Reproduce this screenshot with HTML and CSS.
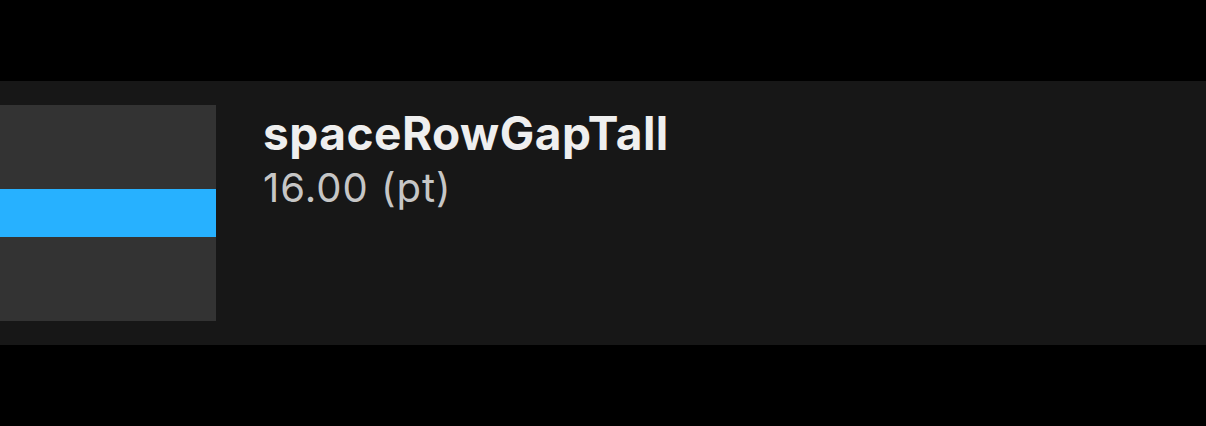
FILE: index.html
```html
<!DOCTYPE html>
<html>
<head>
<meta charset="utf-8">
<link rel="stylesheet" href="styles.css">
</head>
<body>
<div class="row">
  <div class="swatch"><div class="gap-bar"></div></div>
  <div class="info">
    <div class="name">spaceRowGapTall</div>
    <div class="value">16.00 (pt)</div>
  </div>
</div>
</body>
</html>
```
FILE: styles.css
```css
html, body {
  margin: 0;
  padding: 0;
  background: #000;
  height: 100%;
}
body {
  padding-top: 81px;
  box-sizing: border-box;
  font-family: Inter, "Noto Sans", sans-serif;
}
.row {
  background: #171717;
  height: 264px;
  box-sizing: border-box;
  padding: 24px 0;
  display: flex;
  gap: 47px;
}
.swatch {
  width: 216px;
  height: 216px;
  background: #333333;
  display: flex;
  flex-direction: column;
  justify-content: center;
}
.gap-bar {
  height: 48px;
  background: #27b1ff;
}
.info {
  display: flex;
  flex-direction: column;
  padding-top: 2px;
}
.name {
  color: #efefef;
  font-weight: 700;
  font-size: 46px;
  line-height: 52px;
  letter-spacing: 0.5px;
}
.value {
  color: #c6c6c6;
  font-weight: 400;
  font-size: 40px;
  line-height: 48px;
  margin-top: 5px;
  letter-spacing: 1px;
}
```
